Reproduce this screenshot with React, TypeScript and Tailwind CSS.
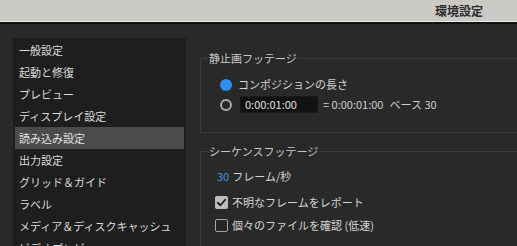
const font = { fontFamily: '"Noto Sans CJK JP", "Noto Sans", sans-serif' };

const items = [
  "一般設定",
  "起動と修復",
  "プレビュー",
  "ディスプレイ設定",
  "読み込み設定",
  "出力設定",
  "グリッド＆ガイド",
  "ラベル",
  "メディア＆ディスクキャッシュ",
  "ビデオプレビュー",
];

function Radio({ on }: { on?: boolean }) {
  return on ? (
    <span className="w-[12px] h-[12px] rounded-full bg-[#2f8deb] shrink-0" />
  ) : (
    <span className="w-[12px] h-[12px] rounded-full border-2 border-[#a9a9a9] shrink-0" />
  );
}

function Checkbox({ on }: { on?: boolean }) {
  return on ? (
    <span className="w-[13px] h-[13px] rounded-[2px] bg-[#bdbdbd] shrink-0 flex items-center justify-center">
      <svg viewBox="0 0 12 12" className="w-[11px] h-[11px]">
        <path d="M2 6.3 L4.8 9 L10 3" fill="none" stroke="#1c1c1c" strokeWidth="2" strokeLinecap="round" strokeLinejoin="round" />
      </svg>
    </span>
  ) : (
    <span className="w-[13px] h-[13px] rounded-[2px] border border-[#a3a3a3] bg-[#262626] shrink-0" />
  );
}

export default function App() {
  return (
    <div className="w-[517px] h-[246px] overflow-hidden bg-[#292929] text-[#d2d2d2] text-[11px]" style={font}>
      {/* title bar */}
      <div className="h-[22px] bg-[#cbc9c5] flex items-center justify-end pr-[34px] border-b border-[#ebebeb]">
        <span className="text-[12px] font-bold text-[#2b2b2b] leading-none">環境設定</span>
      </div>
      <div className="h-[2px] bg-[#121212]" />

      <div className="flex">
        {/* left list */}
        <div className="ml-[13px] mt-[14px] w-[173px] h-[220px] bg-[#1e1e1e] px-[2px] pt-[1px]">
          {items.map((t, i) => (
            <div
              key={t}
              className={
                "h-[22px] flex items-center pl-[4px] whitespace-nowrap " +
                (i === 4 ? "bg-[#4b4b4b] text-[#e2e2e2]" : "text-[#dcdcdc]")
              }
            >
              {t}
            </div>
          ))}
        </div>

        {/* right settings */}
        <div className="ml-[14px] flex-1 overflow-hidden">
          <div className="w-[340px] mt-[26px]">
            <fieldset className="border border-[#3b3b3b]">
              <legend className="ml-[7px] px-[1px] leading-[16px] text-[#c9c9c9]">静止画フッテージ</legend>
              <div className="pl-[19px] pb-[19px]">
                <div className="flex items-center gap-[6px] h-[17px] mt-[10px]">
                  <Radio on />
                  <span className="text-[#d4d4d4]">コンポジションの長さ</span>
                </div>
                <div className="flex items-center h-[17px] mt-[3px]">
                  <Radio />
                  <div className="ml-[8px] w-[78px] h-[17px] bg-[#121212] border border-[#1a1a1a] flex items-center pl-[4px] text-[#e0e0e0]">
                    0:00:01:00
                  </div>
                  <span className="ml-[5px] text-[#cfcfcf]">= 0:00:01:00</span>
                  <span className="ml-[6px] text-[#cfcfcf]">ベース 30</span>
                </div>
              </div>
            </fieldset>

            <fieldset className="mt-[10px] border border-[#3b3b3b] h-[120px]">
              <legend className="ml-[7px] px-[1px] leading-[16px] text-[#c9c9c9]">シーケンスフッテージ</legend>
              <div className="pl-[14px]">
                <div className="flex items-center h-[16px] mt-[9px] pl-[2px]">
                  <span className="text-[#3d95e0] mr-[3px]">30</span>
                  <span className="text-[#d4d4d4]">フレーム/秒</span>
                </div>
                <div className="flex items-center gap-[4px] h-[17px] mt-[10px]">
                  <Checkbox on />
                  <span className="text-[#d4d4d4]">不明なフレームをレポート</span>
                </div>
                <div className="flex items-center gap-[4px] h-[17px] mt-[6px]">
                  <Checkbox />
                  <span className="text-[#d4d4d4]">個々のファイルを確認 (低速)</span>
                </div>
              </div>
            </fieldset>
          </div>
        </div>
      </div>
    </div>
  );
}
